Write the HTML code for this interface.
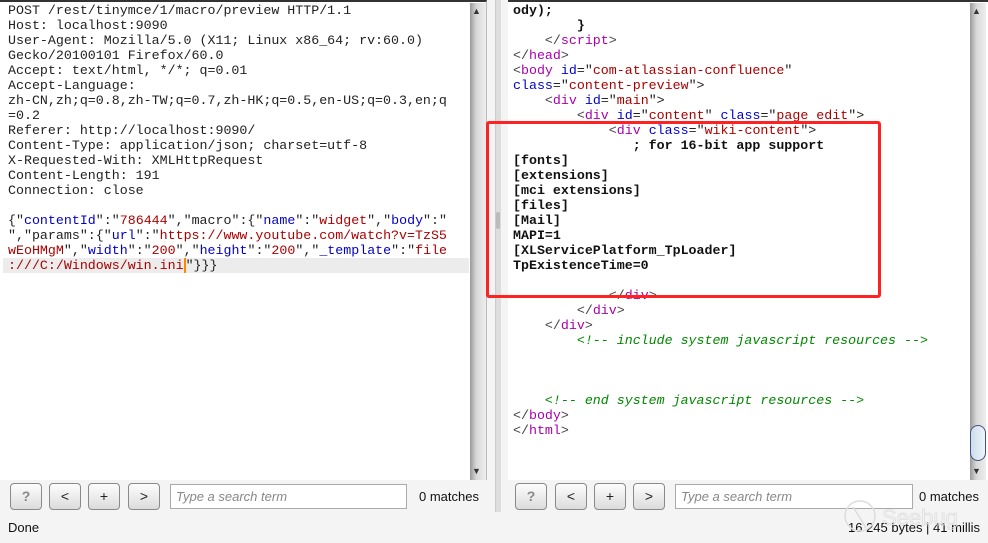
<!DOCTYPE html>
<html><head><meta charset="utf-8"><style>
*{margin:0;padding:0;box-sizing:border-box}
body{width:988px;height:543px;background:#f4f4f4;position:relative;overflow:hidden;font-family:"Liberation Sans",sans-serif}
.pane{position:absolute;top:0;background:#fff;border-top:2px solid #333;}
.code{position:absolute;font-family:"Liberation Mono",monospace;font-size:13.3px;line-height:15px;white-space:pre;color:#222}
.l{height:15px}
.t{color:#a0a}.a{color:#00c}.v{color:#a00}.p{color:#444}.c{color:#080;font-style:italic}
b{font-weight:bold;color:#111}
.sb{position:absolute;background:linear-gradient(90deg,#999,#d8d8d8 40%,#eee);}
.btn{position:absolute;top:483px;width:32px;height:27px;border:1px solid #8a8a8a;border-radius:4px;background:linear-gradient(#fdfdfd,#dcdcdc);font-size:14px;text-align:center;line-height:25px;color:#222}
.srch{position:absolute;top:484px;height:25px;border:1px solid #aaa;background:#fff;font-size:13px;font-style:italic;color:#888;padding:4px 5px}
.m{position:absolute;top:489px;font-size:13px;color:#111}
</style></head><body>
<div class="pane" style="left:0;width:487px;height:480px;border-right:1px solid #bbb"></div>
<div style="position:absolute;left:3px;top:258px;width:466px;height:15px;background:#ececec"></div>
<div class="code" style="left:8px;top:3px"><div class="l">POST /rest/tinymce/1/macro/preview HTTP/1.1</div><div class="l">Host: localhost:9090</div><div class="l">User-Agent: Mozilla/5.0 (X11; Linux x86_64; rv:60.0)</div><div class="l">Gecko/20100101 Firefox/60.0</div><div class="l">Accept: text/html, */*; q=0.01</div><div class="l">Accept-Language:</div><div class="l">zh-CN,zh;q=0.8,zh-TW;q=0.7,zh-HK;q=0.5,en-US;q=0.3,en;q</div><div class="l">=0.2</div><div class="l">Referer: http://localhost:9090/</div><div class="l">Content-Type: application/json; charset=utf-8</div><div class="l">X-Requested-With: XMLHttpRequest</div><div class="l">Content-Length: 191</div><div class="l">Connection: close</div><div class="l"> </div><div class="l">{"<span class="a">contentId</span>":"<span class="v">786444</span>","macro":{"<span class="a">name</span>":"<span class="v">widget</span>","<span class="a">body</span>":"</div><div class="l">","params":{"<span class="a">url</span>":"<span class="v">https://www.youtube.com/watch?v=TzS5</span></div><div class="l"><span class="v">wEoHMgM</span>","<span class="a">width</span>":"<span class="v">200</span>","<span class="a">height</span>":"<span class="v">200</span>","<span class="a">_template</span>":"<span class="v">file</span></div><div class="l"><span class="v">:///C:/Windows/win.ini</span><span style="border-left:2px solid #f80"></span>"}}}</div></div>
<div class="sb" style="left:470px;top:3px;width:16px;height:477px"></div>
<div style="position:absolute;left:472px;top:6px;font-size:9px;color:#333">▲</div>
<div style="position:absolute;left:472px;top:466px;font-size:9px;color:#333">▼</div>
<div style="position:absolute;left:495px;top:0;width:6px;height:512px;background:#ddd;border-left:1px solid #ccc"></div>
<div style="position:absolute;left:496px;top:212px;width:4px;height:17px;background:#bbb;border-radius:2px"></div>
<div class="pane" style="left:508px;width:480px;height:480px"></div>
<div class="code" style="left:513px;top:3px"><div class="l"><b>ody);</b></div><div class="l"><b>        }</b></div><div class="l">    <span class="p">&lt;/</span><span class="t">script</span><span class="p">&gt;</span></div><div class="l"><span class="p">&lt;/</span><span class="t">head</span><span class="p">&gt;</span></div><div class="l"><span class="p">&lt;</span><span class="t">body</span> <span class="a">id</span>="<span class="v">com-atlassian-confluence</span>"</div><div class="l"><span class="a">class</span>="<span class="v">content-preview</span>"&gt;</div><div class="l">    <span class="p">&lt;</span><span class="t">div</span> <span class="a">id</span>="<span class="v">main</span>"&gt;</div><div class="l">        <span class="p">&lt;</span><span class="t">div</span> <span class="a">id</span>="<span class="v">content</span>" <span class="a">class</span>="<span class="v">page edit</span>"&gt;</div><div class="l">            <span class="p">&lt;</span><span class="t">div</span> <span class="a">class</span>="<span class="v">wiki-content</span>"&gt;</div><div class="l"><b>               ; for 16-bit app support</b></div><div class="l"><b>[fonts]</b></div><div class="l"><b>[extensions]</b></div><div class="l"><b>[mci extensions]</b></div><div class="l"><b>[files]</b></div><div class="l"><b>[Mail]</b></div><div class="l"><b>MAPI=1</b></div><div class="l"><b>[XLServicePlatform_TpLoader]</b></div><div class="l"><b>TpExistenceTime=0</b></div><div class="l"> </div><div class="l">            <span class="p">&lt;/</span><span class="t">div</span><span class="p">&gt;</span></div><div class="l">        <span class="p">&lt;/</span><span class="t">div</span><span class="p">&gt;</span></div><div class="l">    <span class="p">&lt;/</span><span class="t">div</span><span class="p">&gt;</span></div><div class="l">        <span class="c">&lt;!-- include system javascript resources --&gt;</span></div><div class="l"> </div><div class="l"> </div><div class="l"> </div><div class="l">    <span class="c">&lt;!-- end system javascript resources --&gt;</span></div><div class="l"><span class="p">&lt;/</span><span class="t">body</span><span class="p">&gt;</span></div><div class="l"><span class="p">&lt;/</span><span class="t">html</span><span class="p">&gt;</span></div></div>
<div class="sb" style="left:970px;top:3px;width:16px;height:477px"></div>
<div style="position:absolute;left:970px;top:425px;width:16px;height:36px;border:1px solid #457;border-radius:8px;background:linear-gradient(90deg,#cde,#eef4fa)"></div>
<div style="position:absolute;left:972px;top:6px;font-size:9px;color:#333">▲</div>
<div style="position:absolute;left:972px;top:466px;font-size:9px;color:#333">▼</div>
<div style="position:absolute;left:486px;top:121px;width:395px;height:177px;border:3px solid #f22;border-radius:3px"></div>
<div class="btn" style="left:10px;color:#888;font-weight:bold">?</div>
<div class="btn" style="left:49px">&lt;</div>
<div class="btn" style="left:88px">+</div>
<div class="btn" style="left:128px">&gt;</div>
<div class="srch" style="left:170px;width:237px">Type a search term</div>
<div class="m" style="left:419px">0 matches</div>
<div class="btn" style="left:515px;color:#888;font-weight:bold">?</div>
<div class="btn" style="left:555px">&lt;</div>
<div class="btn" style="left:594px">+</div>
<div class="btn" style="left:633px">&gt;</div>
<div class="srch" style="left:675px;width:238px">Type a search term</div>
<div class="m" style="left:919px">0 matches</div>
<div style="position:absolute;left:8px;top:520px;font-size:13px;color:#111">Done</div>
<div style="position:absolute;right:8px;top:520px;font-size:13px;color:#111">16 245 bytes | 41 millis</div>
<svg style="position:absolute;left:842px;top:498px" width="140" height="45"><circle cx="18" cy="18" r="15" fill="none" stroke="#ddd" stroke-width="1.5"/><path d="M18 20 L11 9 M18 20 L24 30" stroke="#ddd" stroke-width="1.5"/><text x="40" y="27" font-family="Liberation Sans" font-size="22" fill="none" stroke="#ddd" stroke-width="0.8">Seebug</text></svg>
</body></html>
